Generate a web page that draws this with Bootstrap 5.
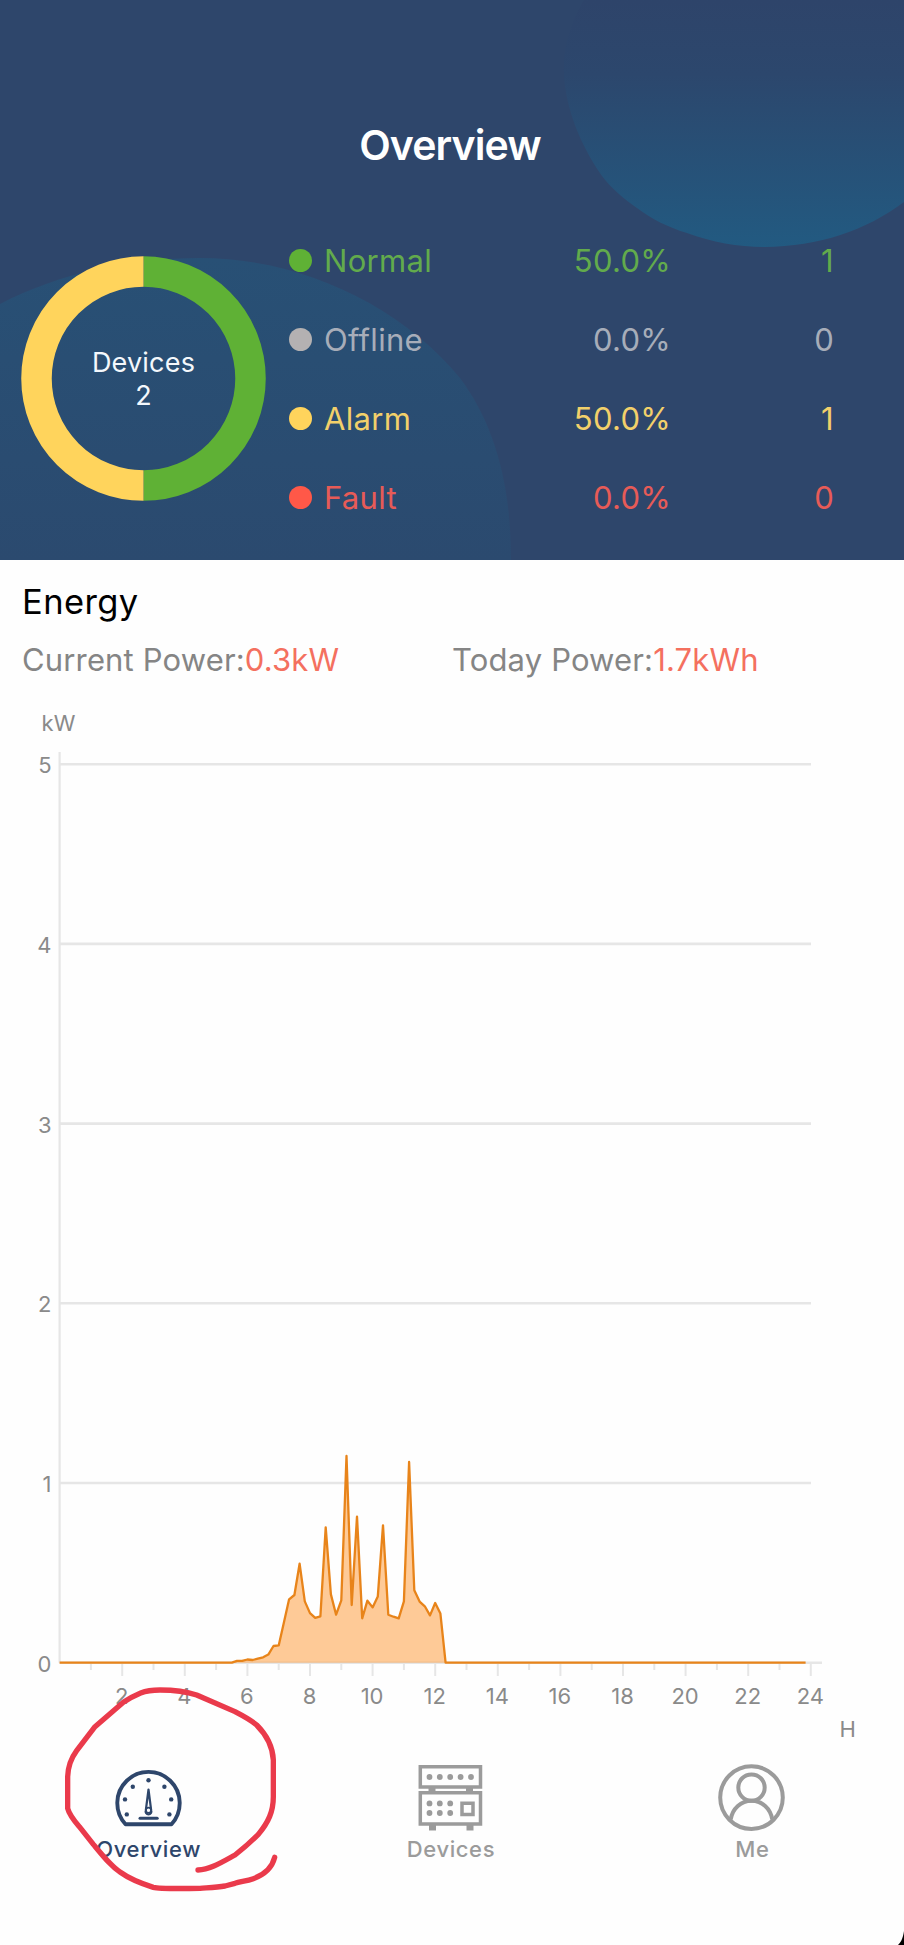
<!DOCTYPE html>
<html lang="en">
<head>
<meta charset="utf-8">
<meta name="viewport" content="width=device-width, initial-scale=1">
<title>Overview</title>
<link href="https://cdn.jsdelivr.net/npm/bootstrap@5.3.0/dist/css/bootstrap.min.css" rel="stylesheet">
<style>
  body { font-family: Inter, "Liberation Sans", sans-serif; background: #fefefe; color: #000; }
  .screen { width: 904px; height: 1945px; }
  .hero { height: 560px; background: #2e466b; }
  .hero-title { padding: 119px 4px 0 0; height: 228px; font-size: 41px; line-height: 52px; font-weight: 600; letter-spacing: -.9px; }
  .donut { width: 245px; height: 245px; margin: 28px 0 0 21px; }
  .donut-label { font-size: 27px; line-height: 33px; letter-spacing: .2px; padding-top: 1px; color: #f4f8fc; }
  .legend { margin-left: 23px; width: 545px; }
  .legend-row { height: 79px; font-size: 31px; line-height: 40px; letter-spacing: .3px; }
  .legend-row:first-child { margin-top: -7px; }
  .dot { width: 23px; height: 23px; margin-right: 12px; }
  .pct { width: 160px; margin-left: auto; }
  .cnt { width: 163px; }
  .c-normal { color: #62ab4c; } .c-normal .dot { background: #5fb135; }
  .c-offline { color: #a7adb9; } .c-offline .dot { background: #b4b1b2; }
  .c-alarm { color: #f2d06a; } .c-alarm .dot { background: #ffd45c; }
  .c-fault { color: #e75b57; } .c-fault .dot { background: #ff5848; }
  .energy { height: 136px; padding: 20px 22px 0; }
  .energy h2 { font-size: 34.5px; line-height: 44px; font-weight: 400; margin: 0; letter-spacing: .4px; }
  .stats { font-size: 31px; line-height: 40px; margin-top: 16px; color: #858585; letter-spacing: .15px; }
  .stats > div { width: 430px; }
  .stats b { font-weight: 400; color: #f4705f; }
  .axis-text { font-size: 22px; fill: #8a8a8a; }
  .tabs { height: 189px; padding-top: 3px; }
  .tab { color: #9b9b9b; font-size: 22px; line-height: 28px; font-weight: 500; letter-spacing: .6px; text-decoration: none; padding-right: 2px; }
  .tab.current { color: #2e466b; padding-right: 4px; }
  .tab svg { margin-bottom: -2px; }
  .marker { left: 40px; top: 1670px; }
  .corner { right: 0; bottom: 0; }
</style>
</head>
<body>
<main class="screen position-relative overflow-hidden">
  <header class="hero position-relative">
    <svg class="position-absolute top-0 start-0" width="904" height="560" viewBox="0 0 904 560" aria-hidden="true">
      <defs>
        <linearGradient id="gTop" x1="0" y1="0" x2="0" y2="1"><stop offset="0" stop-color="#2e446a"/><stop offset=".3" stop-color="#2c476d"/><stop offset="1" stop-color="#225a81"/></linearGradient>
        <linearGradient id="gLow" x1="0" y1="0" x2="0" y2="1"><stop offset="0" stop-color="#285075"/><stop offset="1" stop-color="#2b4a6f"/></linearGradient>
      </defs>
      <path fill="url(#gTop)" d="M584 0C566 30 561 60 565 86C568 108 577 140 602 176C611 188 625 200 637 208C652 219 667 227 687 233C712 242 738 247 764 247C820 246 865 231 904 202V0Z"/>
      <path fill="url(#gLow)" d="M0 304C60 273 130 258 200 258C300 258 400 305 460 378C495 425 511 485 511 560H0Z"/>
    </svg>
    <div class="position-relative">
      <h1 class="hero-title text-center text-white mb-0">Overview</h1>
      <div class="d-flex">
        <div class="donut position-relative d-flex align-items-center justify-content-center">
          <svg class="position-absolute top-0 start-0" width="245" height="245" viewBox="0 0 245 245" fill="none" stroke-width="30.5" aria-hidden="true">
            <path stroke="#5fb135" d="M122.5 15.5a107 107 0 0 1 0 214"/>
            <path stroke="#ffd45c" d="M122.5 229.5a107 107 0 0 1 0-214"/>
          </svg>
          <div class="donut-label position-relative text-center">Devices<br>2</div>
        </div>
        <div class="legend">
          <div class="legend-row c-normal d-flex align-items-center"><span class="dot rounded-circle"></span><span>Normal</span><span class="pct text-end">50.0%</span><span class="cnt text-end">1</span></div>
          <div class="legend-row c-offline d-flex align-items-center"><span class="dot rounded-circle"></span><span>Offline</span><span class="pct text-end">0.0%</span><span class="cnt text-end">0</span></div>
          <div class="legend-row c-alarm d-flex align-items-center"><span class="dot rounded-circle"></span><span>Alarm</span><span class="pct text-end">50.0%</span><span class="cnt text-end">1</span></div>
          <div class="legend-row c-fault d-flex align-items-center"><span class="dot rounded-circle"></span><span>Fault</span><span class="pct text-end">0.0%</span><span class="cnt text-end">0</span></div>
        </div>
      </div>
    </div>
  </header>

  <section class="energy">
    <h2>Energy</h2>
    <div class="stats d-flex">
      <div>Current Power:<b>0.3kW</b></div>
      <div>Today Power:<b>1.7kWh</b></div>
    </div>
  </section>

  <svg id="chart" class="d-block" width="904" height="1060" viewBox="0 696 904 1060" role="img" aria-label="Power in kW by hour">
    <g id="grid" stroke="#e6e6e6" stroke-width="2.6"></g>
    <path id="area" fill="#ff8c1a" fill-opacity=".45"/>
    <path id="line" fill="none" stroke="#e8841a" stroke-width="2.3" stroke-linejoin="round"/>
    <g id="labels" class="axis-text">
      <text x="41.5" y="731" textLength="34">kW</text>
      <text x="839.5" y="1736.5">H</text>
    </g>
  </svg>

  <nav class="tabs row g-0 text-center">
    <a class="tab current col-4 d-flex flex-column align-items-center" href="#">
      <svg width="68" height="78" viewBox="0 0 68 78" fill="none" stroke="currentColor" stroke-width="3.9" aria-hidden="true">
        <path d="M10.5 65.2A31.2 31.2 0 1 1 56.5 65.2Z" stroke-linejoin="round"/>
        <path d="M33.5 30.5L30.8 51.5a2.9 2.9 0 1 0 5.4 0Z" stroke-width="2.2" stroke-linejoin="round"/>
        <circle cx="33.5" cy="51.2" r="2.6" stroke-width="1.6"/>
        <path d="M25 59.3H42.2" stroke-width="3" stroke-linecap="round"/>
        <g fill="currentColor" stroke="none"><circle cx="33.5" cy="21.3" r="2.2"/><circle cx="17.8" cy="27.7" r="2.2"/><circle cx="49.4" cy="27.7" r="2.2"/><circle cx="10" cy="40.4" r="2.2"/><circle cx="56.2" cy="40.4" r="2.2"/><circle cx="11.8" cy="55.4" r="2.2"/><circle cx="54.4" cy="55.4" r="2.2"/></g>
      </svg>
      <span>Overview</span>
    </a>
    <a class="tab col-4 d-flex flex-column align-items-center" href="#">
      <svg width="68" height="78" viewBox="0 0 68 78" fill="none" stroke="currentColor" stroke-width="3.5" aria-hidden="true">
        <path d="M3.300 7.700H63.500V28H3.300ZM3.300 33.800H63.500V65H3.300ZM45 44.300H56V55.500H45Z"/>
        <g fill="currentColor" stroke="none">
          <path d="M11.500 28h7v5h-7zM49 28h7v5h-7zM12 66h7v5.500h-7zM49.500 66h7v5.500h-7z"/>
          <circle cx="12.500" cy="18" r="2.9"/><circle cx="22.800" cy="18" r="2.9"/><circle cx="33.200" cy="18" r="2.9"/><circle cx="43.600" cy="18" r="2.9"/><circle cx="54" cy="18" r="2.9"/>
          <circle cx="12.500" cy="44.400" r="2.900"/><circle cx="22.800" cy="44.400" r="2.900"/><circle cx="33.200" cy="44.400" r="2.900"/>
          <circle cx="12.500" cy="54" r="2.900"/><circle cx="22.800" cy="54" r="2.900"/><circle cx="33.200" cy="54" r="2.900"/>
        </g>
      </svg>
      <span>Devices</span>
    </a>
    <a class="tab col-4 d-flex flex-column align-items-center" href="#">
      <svg width="68" height="78" viewBox="0 0 68 78" fill="none" stroke="currentColor" stroke-width="4" aria-hidden="true">
        <circle cx="33.500" cy="38.600" r="31.300"/>
        <circle cx="33.500" cy="28.600" r="13.200"/>
        <path d="M12.700 60.500C14.500 49.500 23 41.800 33.500 41.800S52.500 49.500 54.300 60.500"/>
      </svg>
      <span>Me</span>
    </a>
  </nav>

  <svg class="marker position-absolute pe-none" width="260" height="240" viewBox="0 0 780 720" fill="none" stroke="#ea3a4b" stroke-width="16" stroke-linecap="round" stroke-linejoin="round" aria-hidden="true">
    <path d="M474 600C510 599 545 577 585 555C612 534 634 514 655 493C685 457 700 425 700 380V270C698 230 680 195 650 165C635 152 610 138 585 125L470 75C440 65 400 60 360 60C335 60 320 62 302 69C285 76 268 85 250 97L165 170L110 242C93 265 84 290 83 320V415C88 435 105 455 118 470L160 523C195 565 215 590 240 606C265 624 305 641 340 652C355 656 420 656 480 655C505 653 530 652 555 648L585 640C600 635 620 633 640 626C675 613 697 590 704 562"/>
  </svg>
  <svg class="corner position-absolute" width="6" height="14" viewBox="0 0 6 14" aria-hidden="true"><path d="M6 0V14H0C4 10 5 6 6 0Z"/></svg>
</main>

<script src="https://cdn.jsdelivr.net/npm/bootstrap@5.3.0/dist/js/bootstrap.bundle.min.js"></script>
<script>
  // Readings in kW, one every ten minutes from midnight; the day starts producing at 5:30.
  const morning = [0,.01,.01,.018,.015,.022,.03,.045,.093,.096,.223,.353,.377,.551,.341,.276,.25,.258,.753,.38,.267,.347,1.15,.321,.813,.247,.345,.308,.369,.764,.267,.256,.247,.341,1.117,.403,.34,.314,.263,.332,.273,0];
  const data = Array(144).fill(0);
  morning.forEach((v, i) => data[33 + i] = v);

  const x = h => 59.6 + h * 31.3, y = v => 1662.7 - v * 179.7;
  const grid = document.getElementById('grid'), labels = document.getElementById('labels');
  const add = (parent, name, attrs, text) => {
    const el = document.createElementNS('http://www.w3.org/2000/svg', name);
    for (const k in attrs) el.setAttribute(k, attrs[k]);
    if (text !== undefined) el.textContent = text;
    parent.appendChild(el);
  };
  for (let v = 0; v <= 5; v++) {
    add(grid, 'path', { d: `M${x(0)} ${y(v)}H${v ? 811 : 822}` });
    add(labels, 'text', { x: 51.5, y: y(v) + 9, 'text-anchor': 'end' }, v);
  }
  add(grid, 'path', { d: `M${x(0)} 752V${y(0)}`, 'stroke-width': 2.2 });
  for (let h = 1; h <= 24; h++) {
    add(grid, 'path', { d: `M${x(h)} 1663v${h % 2 ? 7 : 13}`, 'stroke-width': 2 });
    if (h % 2 === 0) add(labels, 'text', { x: x(h) - .5, y: 1704, 'text-anchor': 'middle' }, h);
  }
  const pts = data.map((v, i) => `${x(i / 6).toFixed(1)} ${y(v).toFixed(1)}`).join('L');
  document.getElementById('line').setAttribute('d', 'M' + pts);
  document.getElementById('area').setAttribute('d', 'M' + pts + `V${y(0)}H${x(0)}Z`);
</script>
</body>
</html>
